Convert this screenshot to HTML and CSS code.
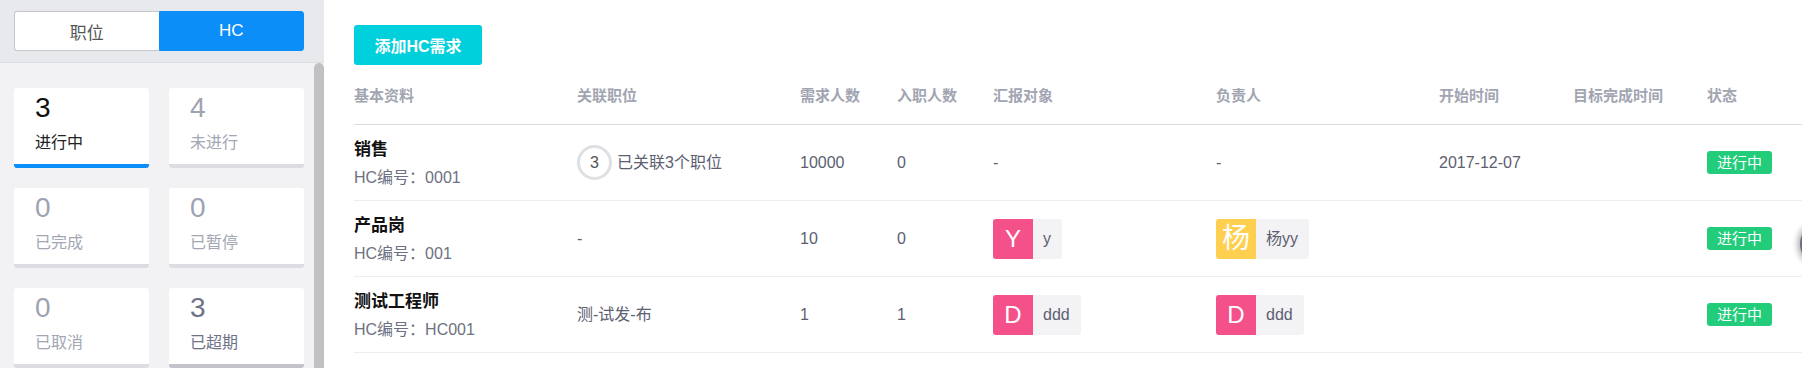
FILE: index.html
```html
<!DOCTYPE html>
<html lang="zh-CN">
<head>
<meta charset="utf-8">
<title>HC</title>
<link rel="stylesheet" href="styles.css">
</head>
<body>
<div class="app">
  <aside class="sidebar">
    <div class="side-top">
      <div class="seg">
        <div class="seg-item">职位</div>
        <div class="seg-item seg-active">HC</div>
      </div>
    </div>
    <div class="side-body">
      <div class="cards">
        <div class="card card-active"><div class="num">3</div><div class="lbl">进行中</div></div>
        <div class="card"><div class="num">4</div><div class="lbl">未进行</div></div>
        <div class="card"><div class="num">0</div><div class="lbl">已完成</div></div>
        <div class="card"><div class="num">0</div><div class="lbl">已暂停</div></div>
        <div class="card"><div class="num">0</div><div class="lbl">已取消</div></div>
        <div class="card card-hover"><div class="num">3</div><div class="lbl">已超期</div></div>
      </div>
      <div class="scrollbar"></div>
    </div>
  </aside>
  <main class="main">
    <button class="add-btn">添加HC需求</button>
    <div class="table">
      <div class="row thead">
        <div>基本资料</div><div>关联职位</div><div>需求人数</div><div>入职人数</div><div>汇报对象</div><div>负责人</div><div>开始时间</div><div>目标完成时间</div><div>状态</div>
      </div>
      <div class="row tr">
        <div class="basic"><div class="title">销售</div><div class="sub">HC编号：0001</div></div>
        <div class="linked"><span class="circle">3</span><span>已关联3个职位</span></div>
        <div>10000</div>
        <div>0</div>
        <div>-</div>
        <div>-</div>
        <div>2017-12-07</div>
        <div></div>
        <div><span class="badge">进行中</span></div>
      </div>
      <div class="row tr">
        <div class="basic"><div class="title">产品岗</div><div class="sub">HC编号：001</div></div>
        <div>-</div>
        <div>10</div>
        <div>0</div>
        <div><span class="chip"><span class="avatar pink">Y</span><span class="name">y</span></span></div>
        <div><span class="chip"><span class="avatar yellow avatar-cjk">杨</span><span class="name">杨yy</span></span></div>
        <div></div>
        <div></div>
        <div><span class="badge">进行中</span></div>
      </div>
      <div class="row tr">
        <div class="basic"><div class="title">测试工程师</div><div class="sub">HC编号：HC001</div></div>
        <div>测-试发-布</div>
        <div>1</div>
        <div>1</div>
        <div><span class="chip"><span class="avatar pink">D</span><span class="name">ddd</span></span></div>
        <div><span class="chip"><span class="avatar pink">D</span><span class="name">ddd</span></span></div>
        <div></div>
        <div></div>
        <div><span class="badge">进行中</span></div>
      </div>
    </div>
  </main>
</div>
<div class="float-btn"></div>
</body>
</html>
```

FILE: styles.css
```css
* { box-sizing: border-box; }
html, body {
  margin: 0;
  padding: 0;
  height: 368px;
  overflow: hidden;
  background: #fff;
  font-family: "Liberation Sans", Arial, "Noto Sans CJK SC", sans-serif;
  color: #5c6070;
}
.app {
  display: flex;
  height: 368px;
}
.sidebar {
  width: 324px;
  flex: 0 0 324px;
  display: flex;
  flex-direction: column;
  background: #f2f2f5;
}
.side-top {
  height: 63px;
  flex: 0 0 63px;
  background: #e8e9ed;
  border-bottom: 1px solid #dcdde1;
  padding: 11px 20px 0 14px;
}
.seg {
  display: flex;
  width: 290px;
  height: 40px;
}
.seg-item {
  flex: 1;
  display: flex;
  align-items: center;
  justify-content: center;
  font-size: 17px;
  color: #555;
  background: #fff;
  border: 1px solid #c6c7cd;
  border-right: none;
  border-radius: 3px 0 0 3px;
}
.seg-item.seg-active {
  background: #0b8ef7;
  color: #fff;
  border: 1px solid #0b8ef7;
  border-radius: 0 3px 3px 0;
}
.side-body {
  flex: 1;
  display: flex;
}
.cards {
  flex: 1;
  display: grid;
  grid-template-columns: 135px 135px;
  grid-auto-rows: 80px;
  column-gap: 20px;
  row-gap: 20px;
  padding: 25px 0 0 14px;
  align-content: start;
}
.card {
  background: #fff;
  border-radius: 3px;
  border-bottom: 4px solid #dcdde3;
  padding: 4px 20px 0 21px;
}
.card .num {
  font-size: 28px;
  line-height: 32px;
  color: #9ea3b1;
}
.card .lbl {
  margin-top: 8px;
  font-size: 16px;
  line-height: 22px;
  color: #a3a7b3;
}
.card-active { border-bottom-color: #0b8ef7; }
.card-active .num { color: #111; }
.card-active .lbl { color: #222; }
.card-hover { border-bottom-color: #c3c4cb; }
.card-hover .num { color: #6e7386; }
.card-hover .lbl { color: #6e7386; }
.scrollbar {
  width: 10px;
  flex: 0 0 10px;
  background: #c1c1c1;
  border-radius: 5px 5px 0 0;
}
.main {
  flex: 1;
  padding: 25px 0 0 30px;
  min-width: 0;
}
.add-btn {
  display: block;
  width: 128px;
  height: 40px;
  border: none;
  border-radius: 3px;
  background: #00cfdc;
  color: #fff;
  font-family: inherit;
  font-size: 16px;
  font-weight: bold;
  padding: 0;
}
.row {
  display: grid;
  grid-template-columns: 223px 223px 97px 96px 223px 223px 134px 134px 1fr;
  align-items: center;
}
.thead {
  height: 60px;
  padding-top: 21px;
  align-items: start;
  border-bottom: 1px solid #dcdcdc;
  font-size: 15px;
  line-height: 20px;
  font-weight: bold;
  color: #a1a5b1;
}
.tr {
  height: 76px;
  border-bottom: 1px solid #eeeeef;
  font-size: 16px;
  line-height: 22px;
  color: #5c6070;
}
.basic { padding-top: 3px; }
.title {
  font-size: 17px;
  font-weight: bold;
  color: #111;
  line-height: 24px;
}
.sub {
  margin-top: 4px;
  font-size: 16px;
  line-height: 24px;
  color: #6d7181;
}
.linked {
  display: flex;
  align-items: center;
  gap: 5px;
}
.circle {
  width: 35px;
  height: 35px;
  border: 3px solid #dfe0e4;
  border-radius: 50%;
  display: inline-flex;
  align-items: center;
  justify-content: center;
  font-size: 16px;
  color: #555;
}
.badge {
  display: inline-block;
  width: 65px;
  height: 23px;
  line-height: 23px;
  text-align: center;
  background: #22cc7b;
  color: #fff;
  font-size: 15px;
  border-radius: 3px;
}
.chip {
  display: inline-flex;
  align-items: center;
  height: 40px;
  background: #f3f3f5;
  border-radius: 3px;
  overflow: hidden;
}
.avatar {
  width: 40px;
  height: 40px;
  display: inline-flex;
  align-items: center;
  justify-content: center;
  color: #fff;
  font-size: 24px;
}
.avatar-cjk { font-size: 28px; }
.pink { background: #f4508a; }
.yellow { background: #ffd04f; }
.name {
  padding: 0 11px 0 10px;
  font-size: 16px;
  color: #5c6070;
}
.float-btn {
  position: fixed;
  left: 1800px;
  top: 222px;
  width: 44px;
  height: 44px;
  border-radius: 50%;
  background: #6a6d78;
  box-shadow: 0 0 6px 2px rgba(0, 0, 0, 0.35);
}
```
